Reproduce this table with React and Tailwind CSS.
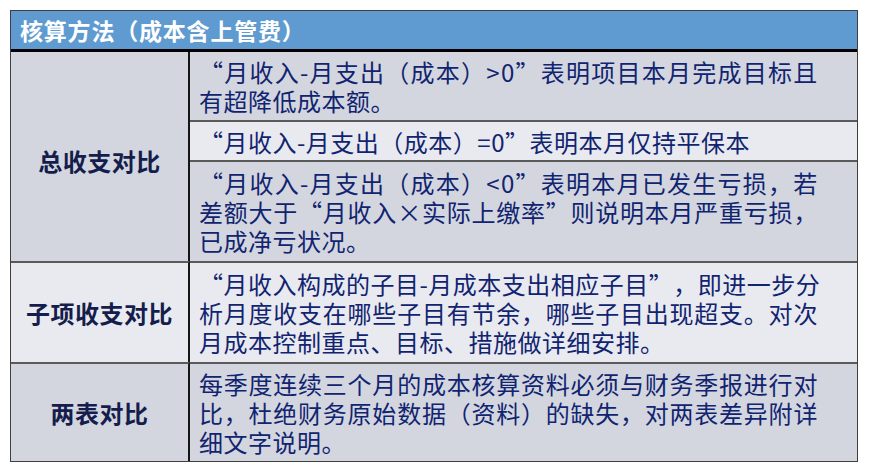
import React from "react";

const font = { fontFamily: '"Noto Sans CJK SC", "Noto Sans", sans-serif' };

function Lines({ lines }) {
  return (
    <div className="flex flex-col">
      {lines.map((l, i) =>
        i < lines.length - 1 ? (
          <div key={i} className="leading-[29px] w-[619px] flex justify-between whitespace-nowrap">
            {Array.from(l).map((c, j) => (
              <span key={j}>{c}</span>
            ))}
          </div>
        ) : (
          <div key={i} className="whitespace-nowrap leading-[29px]">
            {l}
          </div>
        )
      )}
    </div>
  );
}

export default function App() {
  return (
    <div lang="zh-CN" className="w-[870px] h-[474px] bg-white pt-[10px] pl-[10px]" style={font}>
      <div className="w-[848px] border border-[#3f3f3f]">
        <div className="h-[38px] bg-[#5f9bd1] flex items-center pl-[9px] text-white font-bold text-[23px] tracking-[0.8px]">
          核算方法（成本含上管费）
        </div>
        <div className="h-[3px] bg-black" />
        <div className="grid grid-cols-[179px_1fr] grid-rows-[68px_40px_101px_101px_99px] text-[24px] text-[#112470] tracking-[0.5px]">
          <div className="row-span-3 bg-[#d3d6df] border-r-2 border-[#161616] flex items-center justify-center pt-[8px] font-bold text-[#141d4c] tracking-[0.5px]">
            总收支对比
          </div>
          <div className="bg-[#d3d6df] flex items-center pl-[9px]">
            <Lines
              lines={[
                "“月收入-月支出（成本）>0”表明项目本月完成目标且",
                "有超降低成本额。",
              ]}
            />
          </div>
          <div className="bg-[#e9eaef] border-t-2 border-[#5a5a5a] flex items-center pl-[9px]">
            <Lines lines={["“月收入-月支出（成本）=0”表明本月仅持平保本"]} />
          </div>
          <div className="bg-[#d3d6df] border-t-2 border-[#5a5a5a] flex items-center pl-[9px]">
            <Lines
              lines={[
                "“月收入-月支出（成本）<0”表明本月已发生亏损，若",
                "差额大于“月收入×实际上缴率”则说明本月严重亏损，",
                "已成净亏状况。",
              ]}
            />
          </div>

          <div className="bg-[#e9eaef] border-t-2 border-[#5a5a5a] border-r-2 border-r-[#161616] flex items-center justify-center font-bold text-[#141d4c] tracking-[0.5px]">
            子项收支对比
          </div>
          <div className="bg-[#e9eaef] border-t-2 border-[#5a5a5a] flex items-center pl-[9px]">
            <Lines
              lines={[
                "“月收入构成的子目-月成本支出相应子目”，即进一步分",
                "析月度收支在哪些子目有节余，哪些子目出现超支。对次",
                "月成本控制重点、目标、措施做详细安排。",
              ]}
            />
          </div>

          <div className="bg-[#d3d6df] border-t-2 border-[#5a5a5a] border-r-2 border-r-[#161616] flex items-center justify-center font-bold text-[#141d4c] tracking-[0.5px]">
            两表对比
          </div>
          <div className="bg-[#d3d6df] border-t-2 border-[#5a5a5a] flex items-center pl-[9px]">
            <Lines
              lines={[
                "每季度连续三个月的成本核算资料必须与财务季报进行对",
                "比，杜绝财务原始数据（资料）的缺失，对两表差异附详",
                "细文字说明。",
              ]}
            />
          </div>
        </div>
      </div>
    </div>
  );
}
